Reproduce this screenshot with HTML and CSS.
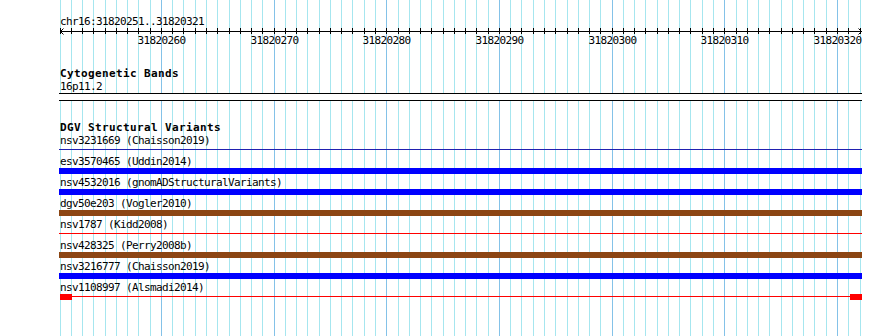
FILE: index.html
```html
<!DOCTYPE html>
<html lang="en">
<head>
    <meta charset="UTF-8">
    <meta name="viewport" content="width=device-width, initial-scale=1.0">
    <title>chr16:31820251..31820321</title>
    <link rel="stylesheet" href="styles.css">
</head>
<body>
    <div class="browser">
        <!-- Base-pair grid behind the tracks -->
        <svg class="grid" width="890" height="336" viewBox="0 0 890 336" shape-rendering="crispEdges">
            <path class="grid-minor" d="M60.5 0V336M71.5 0V336M82.5 0V336M93.5 0V336M105.5 0V336M116.5 0V336M127.5 0V336M138.5 0V336M150.5 0V336M172.5 0V336M183.5 0V336M195.5 0V336M206.5 0V336M217.5 0V336M229.5 0V336M240.5 0V336M251.5 0V336M262.5 0V336M285.5 0V336M296.5 0V336M307.5 0V336M319.5 0V336M330.5 0V336M341.5 0V336M352.5 0V336M364.5 0V336M375.5 0V336M398.5 0V336M409.5 0V336M420.5 0V336M431.5 0V336M443.5 0V336M454.5 0V336M465.5 0V336M476.5 0V336M488.5 0V336M510.5 0V336M521.5 0V336M533.5 0V336M544.5 0V336M555.5 0V336M567.5 0V336M578.5 0V336M589.5 0V336M600.5 0V336M623.5 0V336M634.5 0V336M645.5 0V336M657.5 0V336M668.5 0V336M679.5 0V336M690.5 0V336M702.5 0V336M713.5 0V336M736.5 0V336M747.5 0V336M758.5 0V336M769.5 0V336M781.5 0V336M792.5 0V336M803.5 0V336M814.5 0V336M826.5 0V336M848.5 0V336M860.5 0V336"/>
            <path class="grid-major" d="M161.5 0V336M274.5 0V336M386.5 0V336M499.5 0V336M612.5 0V336M724.5 0V336M837.5 0V336"/>
        </svg>

        <div class="content">
            <!-- Ruler -->
            <div class="ruler">
                <div class="ruler-title">chr16:31820251..31820321</div>
                <svg class="ruler-axis" width="803" height="22" viewBox="59 0 803 22">
                    <path class="axis-line" shape-rendering="crispEdges" d="M60 3.5H862M60.5 0v6M71.5 0v6M82.5 0v6M93.5 0v6M105.5 0v6M116.5 0v6M127.5 0v6M138.5 0v6M150.5 0v6M161.5 0v6M172.5 0v6M183.5 0v6M195.5 0v6M206.5 0v6M217.5 0v6M229.5 0v6M240.5 0v6M251.5 0v6M262.5 0v6M274.5 0v6M285.5 0v6M296.5 0v6M307.5 0v6M319.5 0v6M330.5 0v6M341.5 0v6M352.5 0v6M364.5 0v6M375.5 0v6M386.5 0v6M398.5 0v6M409.5 0v6M420.5 0v6M431.5 0v6M443.5 0v6M454.5 0v6M465.5 0v6M476.5 0v6M488.5 0v6M499.5 0v6M510.5 0v6M521.5 0v6M533.5 0v6M544.5 0v6M555.5 0v6M567.5 0v6M578.5 0v6M589.5 0v6M600.5 0v6M612.5 0v6M623.5 0v6M634.5 0v6M645.5 0v6M657.5 0v6M668.5 0v6M679.5 0v6M690.5 0v6M702.5 0v6M713.5 0v6M724.5 0v6M736.5 0v6M747.5 0v6M758.5 0v6M769.5 0v6M781.5 0v6M792.5 0v6M803.5 0v6M814.5 0v6M826.5 0v6M837.5 0v6M848.5 0v6M860.5 0v6"/>
                    <path class="axis-arrow" d="M63.5 0.5L60.5 3.5L63.5 6.5M858.5 0.5L861.5 3.5L858.5 6.5"/>
                    <text x="161.5" y="16">31820260</text>
                    <text x="274.5" y="16">31820270</text>
                    <text x="386.5" y="16">31820280</text>
                    <text x="499.5" y="16">31820290</text>
                    <text x="612.5" y="16">31820300</text>
                    <text x="724.5" y="16">31820310</text>
                    <text x="837.5" y="16">31820320</text>
                </svg>
            </div>

            <!-- Cytogenetic Bands -->
            <section class="track cyto">
                <div class="track-title">Cytogenetic Bands</div>
                <div class="feature-label">16p11.2</div>
                <div class="cyto-band"></div>
            </section>

            <!-- DGV Structural Variants -->
            <section class="track dgv">
                <div class="track-title">DGV Structural Variants</div>

                <div class="feature">
                    <div class="feature-label">nsv3231669 (Chaisson2019)</div>
                    <div class="bar"><div class="stroke navy"></div></div>
                </div>
                <div class="feature">
                    <div class="feature-label">esv3570465 (Uddin2014)</div>
                    <div class="bar blue"></div>
                </div>
                <div class="feature">
                    <div class="feature-label">nsv4532016 (gnomADStructuralVariants)</div>
                    <div class="bar blue"></div>
                </div>
                <div class="feature">
                    <div class="feature-label">dgv50e203 (Vogler2010)</div>
                    <div class="bar brown"></div>
                </div>
                <div class="feature">
                    <div class="feature-label">nsv1787 (Kidd2008)</div>
                    <div class="bar"><div class="stroke red"></div></div>
                </div>
                <div class="feature">
                    <div class="feature-label">nsv428325 (Perry2008b)</div>
                    <div class="bar brown"></div>
                </div>
                <div class="feature">
                    <div class="feature-label">nsv3216777 (Chaisson2019)</div>
                    <div class="bar blue"></div>
                </div>
                <div class="feature">
                    <div class="feature-label">nsv1108997 (Alsmadi2014)</div>
                    <div class="bar ends">
                        <div class="end-box"></div>
                        <div class="stroke red"></div>
                        <div class="end-box"></div>
                    </div>
                </div>
            </section>
        </div>
    </div>
</body>
</html>
```

FILE: styles.css
```css
/* Reset some default styles */
* {
    margin: 0;
    padding: 0;
    box-sizing: border-box;
}

body {
    font-family: "DejaVu Sans Mono", monospace;
    font-size: 11px;
    letter-spacing: -0.62px;
    background-color: #fff;
    color: #000;
}

.browser {
    position: relative;
    width: 890px;
    height: 336px;
    overflow: hidden;
}

/* Grid sits behind everything */
.grid {
    position: absolute;
    left: 0;
    top: 0;
}

.grid-minor {
    stroke: #a6e6ef;
    stroke-width: 1;
}

.grid-major {
    stroke: #84c2e8;
    stroke-width: 1;
}

.content {
    position: relative;
    width: 862px;
    padding-left: 59px;
}

/* Ruler */
.ruler {
    padding-top: 15px;
}

.ruler-title {
    line-height: 13px;
    padding-left: 1px;
}

.ruler-axis {
    display: block;
}

.axis-line,
.axis-arrow {
    fill: none;
    stroke: #000;
    stroke-width: 1;
}

.ruler-axis text {
    font-family: "DejaVu Sans Mono", monospace;
    font-size: 11px;
    letter-spacing: -0.62px;
    text-anchor: middle;
    fill: #000;
}

/* Tracks */
.track-title {
    font-weight: bold;
    letter-spacing: 0.38px;
    line-height: 13px;
    padding-left: 1px;
}

.feature-label {
    line-height: 13px;
    padding-left: 1px;
    white-space: nowrap;
}

.cyto {
    margin-top: 17px;
}

.cyto-band {
    height: 8px;
    background-color: #fff;
    border-top: 1px solid #000;
    border-bottom: 1px solid #000;
}

.dgv {
    margin-top: 20px;
}

.feature {
    margin-bottom: 2px;
}

.bar {
    display: flex;
    align-items: flex-start;
    height: 6px;
}

.bar.blue {
    background-color: #0000ff;
}

.bar.brown {
    background-color: #8b4513;
}

.stroke {
    flex: 1;
    height: 1px;
    margin-top: 2px;
}

.stroke.navy {
    background-color: #2020b0;
}

.stroke.red {
    background-color: #ff0000;
}

/* Feature with end blocks joined by a thin line */
.bar.ends {
    padding-left: 1px;
}

.end-box {
    width: 12px;
    height: 6px;
    background-color: #ff0000;
}
```
